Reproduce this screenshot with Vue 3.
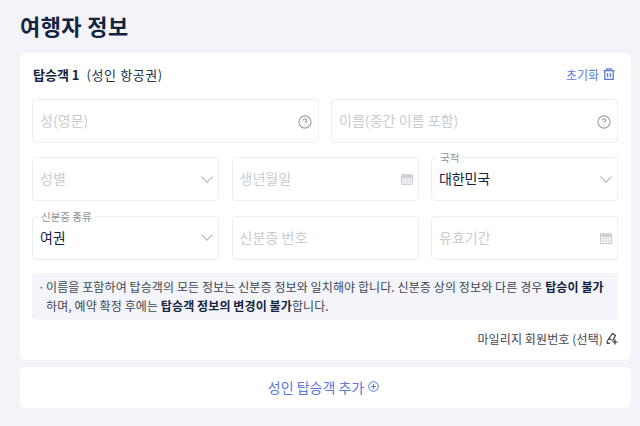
<script setup>
const rows = [
  [
    { ph: '성(영문)', icon: 'help' },
    { ph: '이름(중간 이름 포함)', icon: 'help' },
  ],
  [
    { ph: '성별', icon: 'chevron' },
    { ph: '생년월일', icon: 'cal' },
    { label: '국적', value: '대한민국', icon: 'chevron' },
  ],
  [
    { label: '신분증 종류', value: '여권', icon: 'chevron' },
    { ph: '신분증 번호' },
    { ph: '유효기간', icon: 'cal' },
  ],
]
</script>

<template>
  <div class="page">
    <h1 class="title">여행자 정보</h1>
    <section class="card">
      <header class="head">
        <div class="who"><b>탑승객 1</b><span>(성인 항공권)</span></div>
        <div class="reset">
          초기화
          <svg width="12" height="12" viewBox="0 0 12 12" fill="none" stroke="currentColor" stroke-width="1.3">
            <path d="M0.5 2.6h11M3.8 2.6V0.8h4.4v1.8M1.8 2.6v8.7h8.4V2.6M4.6 5v4M7.4 5v4" />
          </svg>
        </div>
      </header>

      <div v-for="(row, i) in rows" :key="i" class="row" :class="{ two: row.length === 2 }">
        <div v-for="f in row" :key="f.ph || f.label" class="field">
          <span v-if="f.label" class="label">{{ f.label }}</span>
          <span v-if="f.value" class="value">{{ f.value }}</span>
          <span v-else class="ph">{{ f.ph }}</span>

          <svg v-if="f.icon === 'help'" class="ico help" width="14" height="14" viewBox="0 0 15 15" fill="none" stroke="#a3a5a8" stroke-width="1.3">
            <circle cx="7.5" cy="7.5" r="6.5" />
            <path d="M5.6 6c0-1.1.8-1.8 1.9-1.8s1.9.7 1.9 1.7c0 1.3-1.9 1.4-1.9 2.8" />
            <path d="M7.5 10.2v1.1" />
          </svg>
          <svg v-else-if="f.icon === 'chevron'" class="ico" width="12" height="7" viewBox="0 0 12 7" fill="none" stroke="#b3b6bb" stroke-width="1.1">
            <path d="M0.5 0.7L6 6.2l5.5-5.5" />
          </svg>
          <svg v-else-if="f.icon === 'cal'" class="ico" width="12" height="12" viewBox="0 0 12 12">
            <path d="M0.5 2h11v9.5h-11z" fill="#f0f1f4" stroke="#cdd0d4" />
            <path d="M0.5 2h11v2.5h-11zM3 0.5v2M9 0.5v2" fill="#cdd0d4" stroke="#cdd0d4" />
            <path d="M2.5 6.5h1.5M5.3 6.5h1.5M8 6.5h1.5M2.5 9h1.5M5.3 9h1.5M8 9h1.5" stroke="#cdd0d4" />
          </svg>
        </div>
      </div>

      <div class="notice">
        <span class="dot">·</span>
        <p>이름을 포함하여 탑승객의 모든 정보는 신분증 정보와 일치해야 합니다. 신분증 상의 정보와 다른 경우 <b>탑승이 불가</b><br />하며, 예약 확정 후에는 <b>탑승객 정보의 변경이 불가</b>합니다.</p>
      </div>

      <div class="mileage">
        <span>마일리지 회원번호 (선택)</span>
        <svg width="12" height="13" viewBox="0 0 12 13" fill="none" stroke="#2b3038" stroke-width="1.1">
          <path d="M1 9.5L6.5 1.5l3 2-3 5.5M1 9.5l.3 2 2.7-.4M2.5 6l3 2" />
          <path d="M9 7.5v5M6.5 10h5" stroke-width="1.2" />
        </svg>
      </div>
    </section>

    <section class="add">
      성인 탑승객 추가
      <svg width="11" height="11" viewBox="0 0 11 11" fill="none" stroke="currentColor" stroke-width="1">
        <circle cx="5.5" cy="5.5" r="4.8" />
        <path d="M3 5.5h5M5.5 3v5" />
      </svg>
    </section>
  </div>
</template>

<style>
html, body { margin: 0; background: #f2f4f9; }
</style>

<style scoped>
.page {
  width: 640px;
  height: 426px;
  box-sizing: border-box;
  padding: 12px 9px 0 20px;
  background: #f2f4f9;
  overflow: hidden;
  font-family: "Noto Sans CJK KR", "Noto Sans", sans-serif;
  color: #3a3f47;
}
.title {
  margin: 0 0 14px;
  height: 27px;
  font-size: 22px;
  letter-spacing: 0.4px;
  line-height: 27px;
  font-weight: 700;
  color: #14233f;
}
.card {
  height: 307px;
  box-sizing: border-box;
  padding: 11px 13px 0 12px;
  background: #fff;
  border-radius: 6px;
}
.head {
  height: 20px;
  display: flex;
  justify-content: space-between;
  align-items: center;
  margin-bottom: 15px;
  padding-right: 3px;
}
.who {
  display: flex;
  align-items: center;
  gap: 7px;
  padding-left: 1px;
  font-size: 13px;
  color: #26324a;
}
.who span { letter-spacing: 0.6px; }
.who b { color: #14233f; font-weight: 700; }
.reset {
  display: flex;
  align-items: center;
  gap: 4px;
  font-size: 12px;
  color: #5a79dc;
}
.row {
  display: grid;
  grid-template-columns: repeat(3, 187px);
  column-gap: 12.5px;
  margin-bottom: 14.4px;
}
.row.two {
  grid-template-columns: repeat(2, 287px);
  column-gap: 12px;
}
.field {
  position: relative;
  height: 44px;
  box-sizing: border-box;
  border: 1px solid #eceef1;
  border-radius: 4px;
  display: flex;
  align-items: center;
  justify-content: space-between;
  padding: 0 5px 0 7px;
}
.ph { font-size: 14px; letter-spacing: 0.05px; color: #c9ccd0; margin-top: -2px; }
.value { font-size: 14px; letter-spacing: -0.1px; color: #14233f; margin-top: -2px; }
.label {
  position: absolute;
  left: 5px;
  top: -6px;
  padding: 0 3px;
  background: #fff;
  font-size: 10.5px;
  line-height: 11px;
  color: #8c9097;
}
.ico { flex: none; }
.help { margin-top: 2px; margin-right: 1px; }
.notice {
  display: flex;
  height: 47px;
  box-sizing: border-box;
  padding: 4px 12px 0 6px;
  margin-top: -1.2px;
  background: #f3f5fa;
  border-radius: 4px;
  font-size: 12px;
  letter-spacing: 0.1px;
  line-height: 19px;
  color: #3f4650;
}
.dot { width: 8px; flex: none; }
.notice p { margin: 0; white-space: nowrap; }
.notice b { color: #14233f; font-weight: 700; }
.mileage {
  display: flex;
  justify-content: flex-end;
  align-items: center;
  gap: 3px;
  height: 20px;
  margin-top: 9px;
  font-size: 12px;
  letter-spacing: 0.12px;
  color: #3f4650;
}
.add {
  height: 41px;
  box-sizing: border-box;
  margin-top: 7px;
  padding: 0 4px 2px 0;
  background: #fff;
  border-radius: 6px;
  display: flex;
  align-items: center;
  justify-content: center;
  gap: 4px;
  font-size: 14px;
  color: #5a79dc;
}
</style>
